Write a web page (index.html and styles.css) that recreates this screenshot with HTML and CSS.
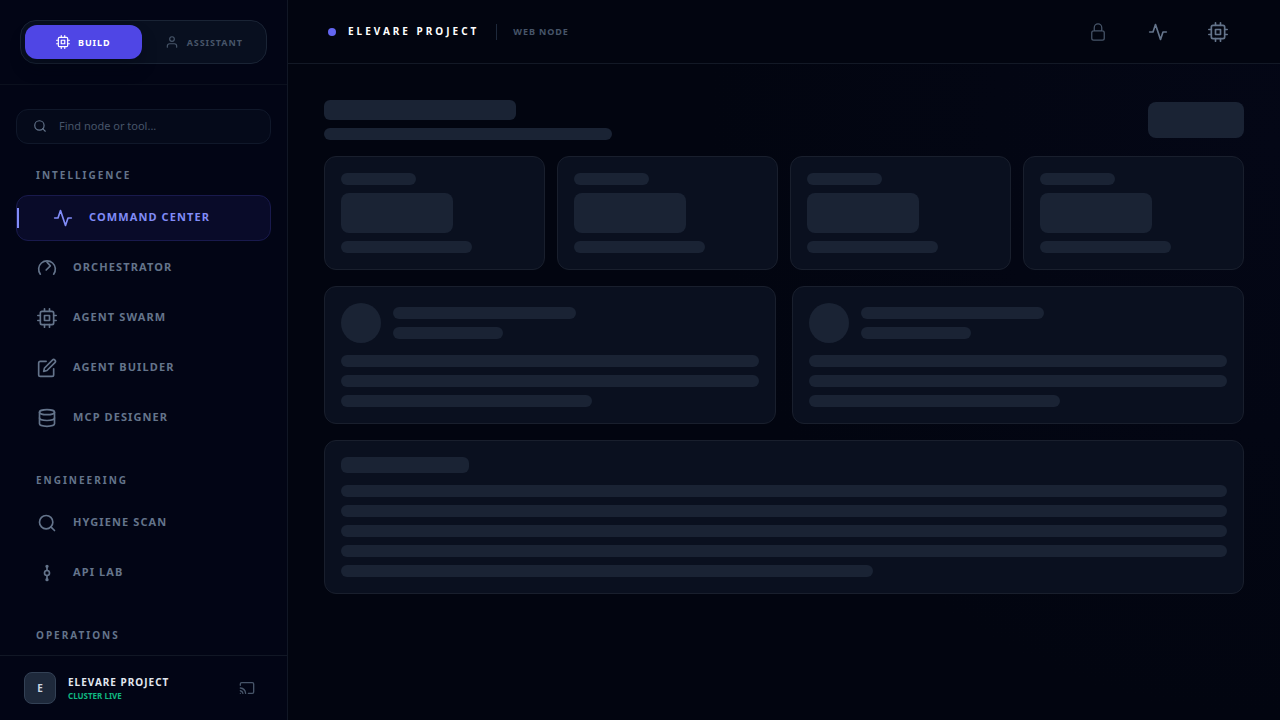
FILE: index.html
```html
<!DOCTYPE html>
<html lang="en">
<head>
<meta charset="utf-8">
<meta name="viewport" content="width=device-width, initial-scale=1">
<title>Elevare Project</title>
<link rel="stylesheet" href="styles.css">
</head>
<body>
<svg class="sprite" aria-hidden="true">
  <symbol id="cpu" viewBox="0 0 24 24"><rect x="4" y="4" width="16" height="16" rx="2"/><rect x="9" y="9" width="6" height="6"/><path d="M9 1v3M15 1v3M9 20v3M15 20v3M20 9h3M20 15h3M1 9h3M1 15h3"/></symbol>
  <symbol id="user" viewBox="0 0 24 24"><path d="M20 21v-2a4 4 0 0 0-4-4H8a4 4 0 0 0-4 4v2"/><circle cx="12" cy="7" r="4"/></symbol>
  <symbol id="search" viewBox="0 0 24 24"><circle cx="11" cy="11" r="8"/><path d="m21 21-4.35-4.35"/></symbol>
  <symbol id="activity" viewBox="0 0 24 24"><path d="M22 12h-4l-3 9L9 3l-3 9H2"/></symbol>
  <symbol id="gauge" viewBox="0 0 24 24"><path d="M4 19.4a10 10 0 1 1 16 0"/><path d="m12 5 4 4.4-5 5"/></symbol>
  <symbol id="edit" viewBox="0 0 24 24"><path d="M11 4H4a2 2 0 0 0-2 2v14a2 2 0 0 0 2 2h14a2 2 0 0 0 2-2v-7"/><path d="M18.5 2.5a2.121 2.121 0 0 1 3 3L12 15l-4 1 1-4z"/></symbol>
  <symbol id="database" viewBox="0 0 24 24"><ellipse cx="12" cy="5" rx="9" ry="3"/><path d="M21 12c0 1.66-4 3-9 3s-9-1.34-9-3"/><path d="M3 5v14c0 1.66 4 3 9 3s9-1.34 9-3V5"/></symbol>
  <symbol id="node" viewBox="0 0 24 24"><circle cx="12" cy="12" r="3"/><path d="M12 4v5M12 15v5"/><circle cx="12" cy="4" r="1"/><circle cx="12" cy="20" r="1"/></symbol>
  <symbol id="lock" viewBox="0 0 24 24"><path d="M16.5 10.5V6.75a4.5 4.5 0 1 0-9 0v3.75m-.75 11.25h10.5a2.25 2.25 0 0 0 2.25-2.25v-6.75a2.25 2.25 0 0 0-2.25-2.25H6.75a2.25 2.25 0 0 0-2.25 2.25v6.75a2.25 2.25 0 0 0 2.25 2.25Z"/></symbol>
  <symbol id="cast" viewBox="0 0 24 24"><path d="M2 16.1A5 5 0 0 1 5.9 20M2 12.05A9 9 0 0 1 9.95 20M2 8V6a2 2 0 0 1 2-2h16a2 2 0 0 1 2 2v12a2 2 0 0 1-2 2h-6M2 20h.01"/></symbol>
</svg>
<div class="app">
  <aside class="sidebar">
    <div class="modes">
      <div class="toggle">
        <button class="mode mode-active" type="button"><svg class="icon icon-sm"><use href="#cpu"/></svg>BUILD</button>
        <button class="mode" type="button"><svg class="icon icon-sm"><use href="#user"/></svg>ASSISTANT</button>
      </div>
    </div>
    <div class="scroll">
      <label class="search">
        <svg class="icon icon-sm"><use href="#search"/></svg>
        <input class="search-input" type="text" placeholder="Find node or tool..." aria-label="Find node or tool">
      </label>
      <nav class="nav">
        <section class="group">
          <h2 class="group-title">INTELLIGENCE</h2>
          <a class="item item-active" href="#"><svg class="icon"><use href="#activity"/></svg><span class="item-label">COMMAND CENTER</span></a>
          <a class="item" href="#"><svg class="icon"><use href="#gauge"/></svg><span class="item-label">ORCHESTRATOR</span></a>
          <a class="item" href="#"><svg class="icon"><use href="#cpu"/></svg><span class="item-label">AGENT SWARM</span></a>
          <a class="item" href="#"><svg class="icon"><use href="#edit"/></svg><span class="item-label">AGENT BUILDER</span></a>
          <a class="item" href="#"><svg class="icon"><use href="#database"/></svg><span class="item-label">MCP DESIGNER</span></a>
        </section>
        <section class="group">
          <h2 class="group-title">ENGINEERING</h2>
          <a class="item" href="#"><svg class="icon"><use href="#search"/></svg><span class="item-label">HYGIENE SCAN</span></a>
          <a class="item" href="#"><svg class="icon"><use href="#node"/></svg><span class="item-label">API LAB</span></a>
        </section>
        <section class="group">
          <h2 class="group-title">OPERATIONS</h2>
        </section>
      </nav>
    </div>
    <footer class="account">
      <div class="avatar">E</div>
      <div class="account-text">
        <div class="account-name">ELEVARE PROJECT</div>
        <div class="account-status">CLUSTER LIVE</div>
      </div>
      <button class="icon-button cast" type="button" aria-label="Cast"><svg class="icon icon-md"><use href="#cast"/></svg></button>
    </footer>
  </aside>
  <div class="content">
    <header class="topbar">
      <span class="dot"></span>
      <h1 class="project">ELEVARE PROJECT</h1>
      <span class="node-label">WEB NODE</span>
      <div class="actions">
        <button class="icon-button dim" type="button" aria-label="Lock"><svg class="icon icon-thin"><use href="#lock"/></svg></button>
        <button class="icon-button" type="button" aria-label="Activity"><svg class="icon"><use href="#activity"/></svg></button>
        <button class="icon-button" type="button" aria-label="System"><svg class="icon"><use href="#cpu"/></svg></button>
      </div>
    </header>
    <main class="main" aria-busy="true">
      <div class="heading">
        <div class="stack"><div class="bone bone-title"></div><div class="bone bone-subtitle"></div></div>
        <div class="bone bone-button"></div>
      </div>
      <div class="stats">
        <div class="card stack"><div class="bone w40"></div><div class="bone bone-value"></div><div class="bone w70"></div></div>
        <div class="card stack"><div class="bone w40"></div><div class="bone bone-value"></div><div class="bone w70"></div></div>
        <div class="card stack"><div class="bone w40"></div><div class="bone bone-value"></div><div class="bone w70"></div></div>
        <div class="card stack"><div class="bone w40"></div><div class="bone bone-value"></div><div class="bone w70"></div></div>
      </div>
      <div class="panels">
        <div class="card sections">
          <div class="person"><div class="bone bone-circle"></div><div class="stack grow"><div class="bone w50"></div><div class="bone w30"></div></div></div>
          <div class="stack"><div class="bone"></div><div class="bone"></div><div class="bone w60"></div></div>
        </div>
        <div class="card sections">
          <div class="person"><div class="bone bone-circle"></div><div class="stack grow"><div class="bone w50"></div><div class="bone w30"></div></div></div>
          <div class="stack"><div class="bone"></div><div class="bone"></div><div class="bone w60"></div></div>
        </div>
      </div>
      <div class="card sections">
        <div class="bone bone-heading"></div>
        <div class="stack"><div class="bone"></div><div class="bone"></div><div class="bone"></div><div class="bone"></div><div class="bone w60"></div></div>
      </div>
    </main>
  </div>
</div>
</body>
</html>
```
FILE: styles.css
```css
* { box-sizing: border-box; }
body {
  margin: 0;
  background: #020510;
  color: #64748b;
  font-family: "Noto Sans", sans-serif;
  font-size: 11px;
}
button, input { font: inherit; color: inherit; background: none; border: 0; padding: 0; margin: 0; }
h1, h2 { margin: 0; }
.sprite { display: none; }
.icon {
  width: 20px;
  height: 20px;
  flex: none;
  fill: none;
  stroke: currentColor;
  stroke-width: 2;
  stroke-linecap: round;
  stroke-linejoin: round;
}
.icon-sm { width: 14px; height: 14px; }
.icon-md { width: 16px; height: 16px; }
.icon-thin { stroke-width: 1.5; }

.app { display: flex; height: 100vh; }

/* Sidebar */
.sidebar {
  display: flex;
  flex-direction: column;
  flex: 0 0 288px;
  background: #020515;
  border-right: 1px solid #111725;
}
.modes { padding: 20px; border-bottom: 1px solid #0b101e; }
.toggle {
  display: grid;
  grid-template-columns: 1fr 1fr;
  gap: 4px;
  padding: 4px;
  background: #080f1f;
  border: 1px solid #1a2435;
  border-radius: 16px;
}
.mode {
  display: flex;
  align-items: center;
  justify-content: center;
  gap: 8px;
  height: 34px;
  border-radius: 12px;
  color: #475569;
  font-size: 9px;
  font-weight: 700;
  letter-spacing: 0.1em;
}
.mode-active { background: #4f46e5; color: #fff; box-shadow: 0 10px 15px rgba(2, 5, 18, 0.3); }
.scroll { flex: 1; min-height: 0; overflow: hidden; padding: 24px 16px 0; }
.search {
  display: flex;
  align-items: center;
  gap: 12px;
  height: 35px;
  margin-bottom: 24px;
  padding: 0 16px 2px;
  background: #050a1a;
  border: 1px solid #10182a;
  border-radius: 12px;
}
.search-input { flex: 1; min-width: 0; outline: 0; }
.search-input::placeholder { color: #475569; opacity: 1; }
.nav { display: flex; flex-direction: column; gap: 32px; }
.group { display: flex; flex-direction: column; gap: 4px; }
.group-title {
  margin-bottom: 8px;
  padding-left: 20px;
  font-size: 10px;
  line-height: 15px;
  font-weight: 700;
  letter-spacing: 2px;
}
.item {
  display: flex;
  align-items: center;
  gap: 16px;
  height: 46px;
  padding: 0 20px;
  border: 1px solid transparent;
  border-radius: 12px;
  color: #64748b;
  font-weight: 700;
  letter-spacing: 0.1em;
  text-decoration: none;
}
.item-label { padding-bottom: 3px; }
.item-active {
  position: relative;
  padding-left: 36px;
  background: #090b29;
  border-color: #191a4d;
  color: #818cf8;
}
.item-active::before {
  content: "";
  position: absolute;
  left: 0;
  top: 12px;
  bottom: 12px;
  width: 2px;
  background: #818cf8;
}
.account {
  display: flex;
  align-items: center;
  gap: 12px;
  padding: 16px 24px;
  border-top: 1px solid #111725;
}
.avatar {
  display: grid;
  place-items: center;
  width: 32px;
  height: 32px;
  background: #1e293b;
  border: 1px solid #334155;
  border-radius: 8px;
  color: #cbd5e1;
  font-size: 10px;
  font-weight: 700;
}
.account-text { flex: 1; }
.account-name { color: #e2e8f0; font-size: 10px; line-height: 15px; font-weight: 700; letter-spacing: 1px; }
.account-status { color: #10b981; font-size: 8px; line-height: 12px; font-weight: 700; }
.icon-button { display: grid; place-items: center; width: 44px; height: 44px; color: #64748b; }
.cast { width: 32px; height: 32px; color: #475569; }
.dim { color: #475569; }

/* Content */
.content {
  flex: 1;
  min-width: 0;
  background: radial-gradient(circle at 100% 20%, #040716, #020510 50%);
}
.topbar {
  display: flex;
  align-items: center;
  height: 64px;
  padding: 0 40px;
  background: #020510;
  border-bottom: 1px solid #131926;
}
.dot { width: 8px; height: 8px; border-radius: 50%; background: #6366f1; }
.project {
  margin: 0 17px 0 12px;
  padding-bottom: 2px;
  color: #fff;
  font-size: 10px;
  font-weight: 700;
  letter-spacing: 3px;
}
.node-label {
  padding-left: 16px;
  border-left: 1px solid #1e293b;
  color: #475569;
  font-size: 9px;
  line-height: 16px;
  font-weight: 700;
  letter-spacing: 0.1em;
}
.actions { display: flex; gap: 16px; margin-left: auto; }
.main { display: flex; flex-direction: column; gap: 16px; padding: 36px; }
.heading { display: flex; align-items: center; justify-content: space-between; }
.stack { display: flex; flex-direction: column; gap: 8px; }
.grow { flex: 1; }
.stats { display: grid; grid-template-columns: repeat(4, 1fr); gap: 12px; }
.panels { display: grid; grid-template-columns: repeat(2, 1fr); gap: 16px; }
.card { padding: 16px; background: #0a101f; border: 1px solid #191f2d; border-radius: 12px; }
.sections { display: flex; flex-direction: column; gap: 12px; }
.person { display: flex; align-items: center; gap: 12px; }
.bone { height: 12px; border-radius: 6px; background: #1a2334; }
.bone-title { width: 192px; height: 20px; }
.bone-subtitle { width: 288px; }
.bone-button { width: 96px; height: 36px; border-radius: 8px; }
.bone-value { width: 112px; height: 40px; border-radius: 8px; }
.bone-circle { width: 40px; height: 40px; border-radius: 50%; }
.bone-heading { width: 128px; height: 16px; }
.w30 { width: 30%; }
.w40 { width: 40%; }
.w50 { width: 50%; }
.w60 { width: 60%; }
.w70 { width: 70%; }
```
